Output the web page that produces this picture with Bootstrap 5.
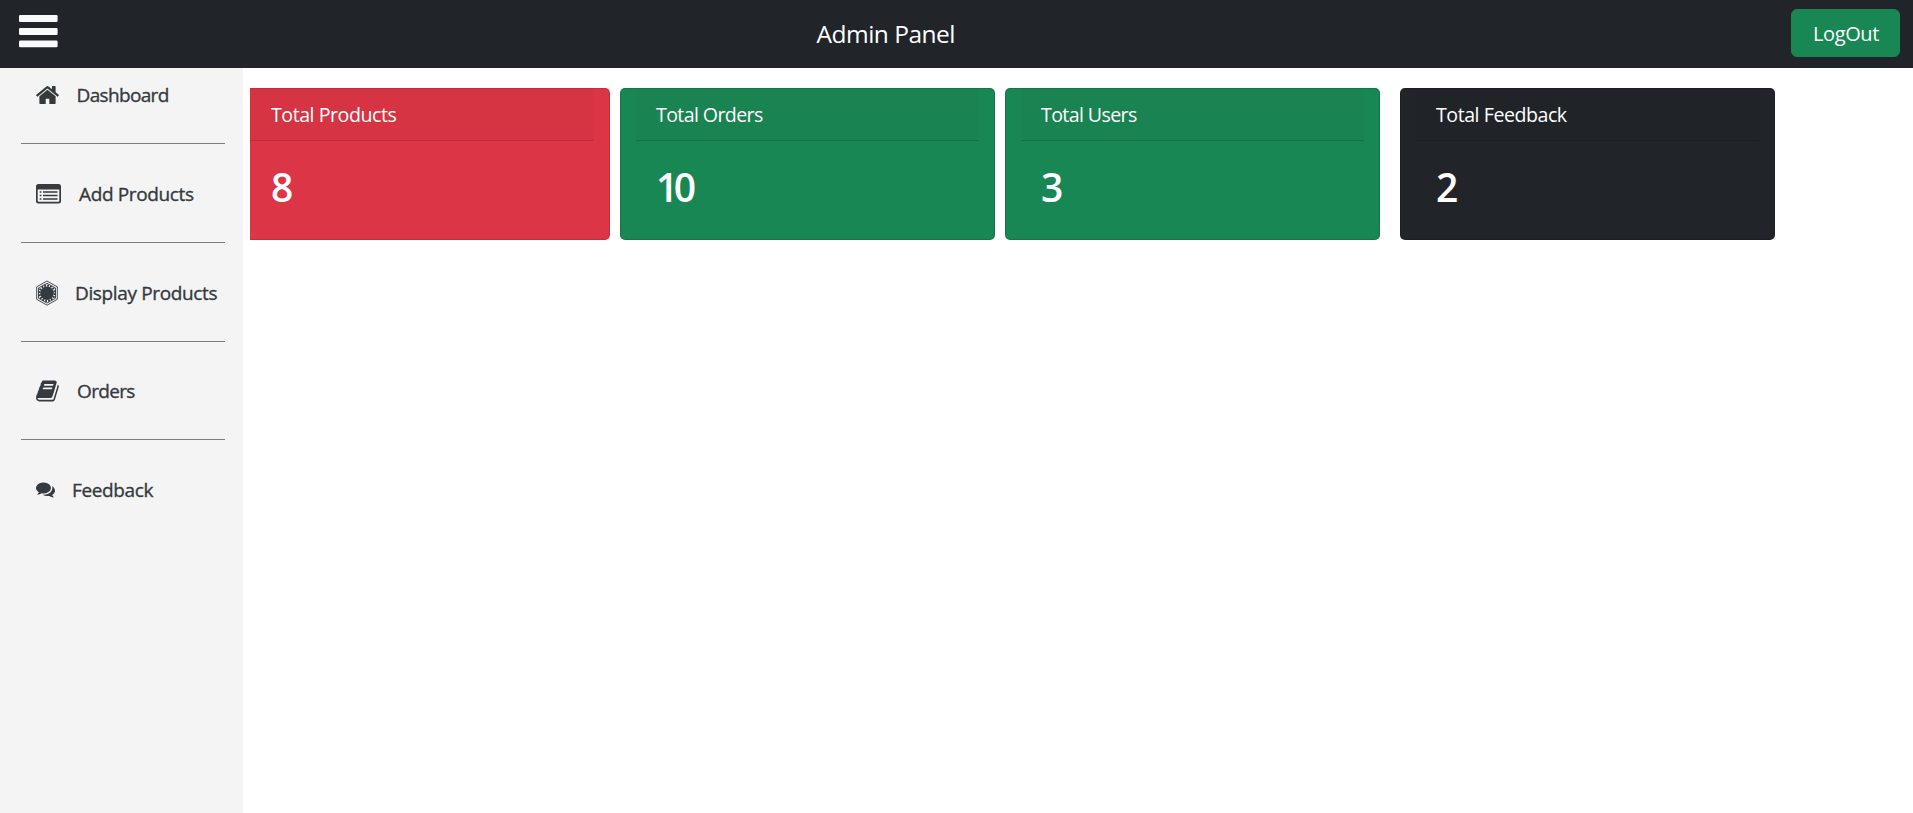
<!DOCTYPE html>
<html lang="en">
<head>
<meta charset="utf-8">
<meta name="viewport" content="width=device-width, initial-scale=1">
<title>Admin Panel</title>
<link href="https://cdn.jsdelivr.net/npm/bootstrap@5.3.0/dist/css/bootstrap.min.css" rel="stylesheet">
<style>
body{font-family:"Open Sans","Noto Sans",sans-serif;font-size:20px;line-height:30px;overflow:hidden}
.topbar{height:68px;padding:0 13px 0 19px}
.topbar-title{font-size:24.5px;line-height:36px;letter-spacing:-.5px;margin-left:758.5px}
.logout{width:109px;height:48px;font-size:20px;line-height:30px;border-radius:6px;padding:9px 0 7px 1px;letter-spacing:-.4px;margin-bottom:2px}
.sidebar{width:243px;height:745px;background:#f4f4f4;padding:0 18px 0 21px}
.side-item{height:99px;padding:12px 0 0 15px;border-bottom:1px solid #7b7d7f;color:#343a40;font-size:19px;letter-spacing:-.36px;-webkit-text-stroke:.35px #343a40;white-space:nowrap}
.side-item:first-child{height:76px}
.side-item:nth-child(4){height:98px}
.side-item + .side-item{padding-top:35px}
.side-item + .side-item:nth-child(4){padding-top:34px}
.side-item:last-child{border:0}
.side-item svg{flex:none;-webkit-text-stroke:0}
.side-item .tight{letter-spacing:-.65px}
.stats{padding:20px 0 0 7px}
.stat{width:375px;height:152px;border-radius:5px;padding:0 15px;border:1px solid rgba(0,0,0,.13)}
.stat-cut{width:360px;padding-left:0;border-left:0;border-top-left-radius:0;border-bottom-left-radius:0}
.stat .card-header{height:52px;padding:11px 20px 10px;font-size:19.6px;line-height:30px;letter-spacing:-.46px;border-bottom:1px solid rgba(0,0,0,.13);border-radius:0}
.stat .card-header.snug{letter-spacing:-.62px}
.stat .card-body{padding:22px 20px 20px}
.stat-cut .card-header,.stat-cut .card-body{padding-left:21px}
.stat-num{font-size:39px;line-height:48px;font-weight:600;letter-spacing:-4.5px;margin:0}
</style>
</head>
<body>
<nav class="topbar bg-dark text-white d-flex align-items-center">
  <svg width="39" height="33" viewBox="0 0 39 33" fill="#f8f9fa" style="margin-bottom:5px"><rect y="0" width="38.6" height="7" rx="1.2"/><rect y="13" width="38.6" height="7" rx="1.2"/><rect y="25.5" width="38.6" height="6.7" rx="1.2"/></svg>
  <span class="topbar-title">Admin Panel</span>
  <a class="btn btn-success logout ms-auto" href="#">LogOut</a>
</nav>
<div class="d-flex">
  <aside class="sidebar">
    <div class="side-item d-flex align-items-start">
      <svg width="23" height="30" viewBox="80 240 1632 1300" fill="#343a40"><path d="M1472 992v480q0 26-19 45t-45 19h-384v-384h-256v384h-384q-26 0-45-19t-19-45v-480q0-1 .5-3t.5-3l575-474 575 474q1 2 1 6zm223-69l-62 74q-8 9-21 11h-3q-13 0-21-7l-692-577-692 577q-12 8-24 7-13-2-21-11l-62-74q-8-10-7-23.5t11-21.5l719-599q32-26 76-26t76 26l244 204v-195q0-14 9-23t23-9h192q14 0 23 9t9 23v408l219 182q10 8 11 21.5t-7 23.5z"/></svg>
      <span class="tight" style="margin-left:17.500px">Dashboard</span>
    </div>
    <div class="side-item d-flex align-items-start">
      <svg width="25" height="30" viewBox="0 0 25 30"><path fill="#343a40" fill-rule="evenodd" d="M2.500 5h20a2.500 2.500 0 0 1 2.500 2.500v14.500a2.500 2.500 0 0 1-2.500 2.500h-20a2.500 2.500 0 0 1-2.500-2.500v-14.500a2.500 2.500 0 0 1 2.500-2.500zM1.700 10.500v11.500q0 .8.800.8h20q.8 0 .8-.8v-11.500z"/><path stroke="#343a40" stroke-width="1.500" d="M3.700 13h1.700m1.600 0h14.500M3.700 16.500h1.700m1.600 0h14.500M3.700 20h1.700m1.600 0h14.500"/></svg>
      <span style="margin-left:18px">Add Products</span>
    </div>
    <div class="side-item d-flex align-items-start">
      <svg width="22" height="30" viewBox="0 0 22 30"><g fill="none" stroke="#343a40"><path stroke-width=".9" d="M11 3 21.300 8.800v12.500L11 27.200.7 21.300V8.800z"/><path stroke-width=".9" d="M11 5.300 19.500 10v10.200L11 25.100 2.500 20.200V10z"/><circle cx="11" cy="15.200" r="7.600" stroke-width="2.400" stroke-dasharray="1.800 1.180"/></g><circle cx="11" cy="15.200" r="6.700" fill="#343a40"/></svg>
      <span style="margin-left:17px">Display Products</span>
    </div>
    <div class="side-item d-flex align-items-start">
      <svg width="23" height="30" viewBox="60 128 1680 1536" fill="#343a40"><path d="M1703 478q40 57 18 129l-275 906q-19 64-76.500 107.500t-122.500 43.500h-923q-77 0-148.500-53.500t-99.500-131.500q-24-67-2-127 0-4 3-27t4-37q1-8-3-21.500t-3-19.500q2-11 8-21t16.500-23.500 16.500-23.500q23-38 45-91.500t30-91.500q3-10 .5-30t-.5-28q3-11 17-28t17-23q21-36 42-92t25-90q1-9-2.500-32t.5-28q4-13 22-30.500t22-22.500q19-26 42.500-84.500t27.500-96.500q1-8-3-25.500t-2-26.500q2-8 9-18t18-23 17-21q8-12 16.500-30.500t15-35 16-36 19.500-32 26.500-23.500 36-11.500 47.500 5.500l-1 3q38-9 51-9h761q74 0 114 56t18 130l-274 906q-36 119-71.500 153.500t-128.500 34.500h-869q-27 0-38 15-11 16-1 43 24 70 144 70h923q29 0 56-15.500t35-41.500l300-987q7-22 5-57 38 15 59 43zm-1064 2q-4 13 2 22.500t20 9.500h608q13 0 25.500-9.500t16.500-22.500l21-64q4-13-2-22.500t-20-9.500h-608q-13 0-25.500 9.500t-16.500 22.500zm-83 256q-4 13 2 22.500t20 9.500h608q13 0 25.500-9.500t16.500-22.500l21-64q4-13-2-22.500t-20-9.500h-608q-13 0-25.500 9.500t-16.500 22.500z"/></svg>
      <span class="tight" style="margin-left:18px">Orders</span>
    </div>
    <div class="side-item d-flex align-items-start">
      <svg width="19" height="30" viewBox="0 256 1792 1408" fill="#343a40"><path d="M1408 768q0 139-94 257t-256.500 186.500-353.500 68.500q-86 0-176-16-124 88-278 128-36 9-86 16h-3q-11 0-20.500-8t-11.500-21q-1-3-1-6.500t.5-6.500 2-6l2.500-5 3.500-5.500 4-5 4.500-5 4-4.500q5-6 23-25t26-29.500 22.500-29 25-38.500 20.500-44q-124-72-195-177t-71-224q0-139 94-257t256.500-186.500 353.500-68.500 353.500 68.500 256.500 186.500 94 257zm384 256q0 120-71 224.500t-195 176.500q10 24 20.500 44t25 38.500 22.500 29 26 29.500 23 25q1 1 4 4.500t4.500 5 4 5 3.500 5.500l2.500 5 2 6 .5 6.500-1 6.500q-3 14-13 22t-22 7q-50-7-86-16-154-40-278-128-90 16-176 16-271 0-472-132 58 4 88 4 161 0 309-45t264-129q125-92 192-212t67-254q0-77-23-152 129 71 204 178t75 230z"/></svg>
      <span style="margin-left:17px">Feedback</span>
    </div>
  </aside>
  <main class="stats d-flex align-items-start">
    <div class="card stat stat-cut text-white bg-danger"><div class="card-header">Total Products</div><div class="card-body"><h5 class="stat-num">8</h5></div></div>
    <div class="card stat text-white bg-success" style="margin-left:10px"><div class="card-header snug">Total Orders</div><div class="card-body"><h5 class="stat-num">10</h5></div></div>
    <div class="card stat text-white bg-success" style="margin-left:10px"><div class="card-header snug">Total Users</div><div class="card-body"><h5 class="stat-num">3</h5></div></div>
    <div class="card stat text-white bg-dark" style="margin-left:20px"><div class="card-header">Total Feedback</div><div class="card-body"><h5 class="stat-num">2</h5></div></div>
  </main>
</div>
<script src="https://cdn.jsdelivr.net/npm/bootstrap@5.3.0/dist/js/bootstrap.bundle.min.js"></script>
</body>
</html>
